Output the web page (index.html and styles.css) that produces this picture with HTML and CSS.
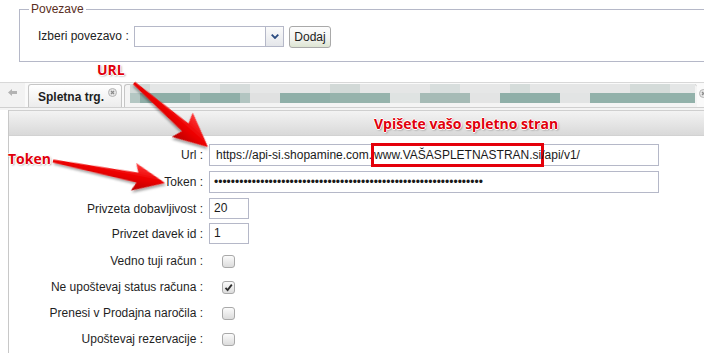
FILE: index.html
```html
<!DOCTYPE html>
<html lang="sl">

<head>
  <meta charset="UTF-8">
  <meta name="viewport" content="width=device-width, initial-scale=1.0">
  <title>Povezave | Spletna trgovina</title>
  <link rel="stylesheet" href="styles.css">
</head>

<body>
  <fieldset class="links">
    <legend>Povezave</legend>
    <div class="links_row">
      <label for="links_select" class="links_label">Izberi povezavo :</label>
      <div class="combo">
        <input type="text" id="links_select" class="combo_input" />
        <span class="combo_trigger">
          <svg width="8" height="5" viewBox="0 0 8 5"><polyline points="0.7,0.7 4,4 7.3,0.7" fill="none" stroke="#2b4b80" stroke-width="1.8" /></svg>
        </span>
      </div>
      <button class="btn">Dodaj</button>
    </div>
  </fieldset>

  <div class="note note-url">URL</div>

  <div class="tabs">
    <span class="tabs_scroll">
      <svg width="9" height="7" viewBox="0 0 9 7"><polygon points="0,3.5 4,0 4,2 9,2 9,5 4,5 4,7" fill="#b3b3b3" /></svg>
    </span>
    <div class="tab tab-active">
      Spletna trg.
      <svg class="tab_close" width="9" height="9" viewBox="0 0 9 9"><circle cx="4.5" cy="4.5" r="4" fill="#e6e6e6" stroke="#b4b4b4" /><path d="M3 3 L6 6 M6 3 L3 6" stroke="#8a8a8a" stroke-width="1.2" /></svg>
    </div>
    <div class="tab tab-blur"><span class="blur"></span></div>
    <svg class="tab_close tab_close-edge" width="9" height="9" viewBox="0 0 9 9"><circle cx="4.5" cy="4.5" r="4" fill="#e6e6e6" stroke="#b4b4b4" /><path d="M3 3 L6 6 M6 3 L3 6" stroke="#8a8a8a" stroke-width="1.2" /></svg>
  </div>
  <div class="tabs_spacer"></div>

  <div class="panel">
    <div class="panel_toolbar"><span class="note">Vpišete vašo spletno stran</span></div>

    <div class="form">
      <div class="form_row form_row-url">
        <label class="form_label">Url :</label>
        <div class="field field-wide">https://api-si.shopamine.com.<span class="field_mark">www.VAŠASPLETNASTRAN.si</span>/api/v1/</div>
      </div>
      <div class="form_row form_row-token">
        <label class="form_label">Token :</label>
        <div class="field field-wide field-secret">••••••••••••••••••••••••••••••••••••••••••••••••••••••••••••••••</div>
      </div>
      <div class="form_row form_row-num">
        <label class="form_label">Privzeta dobavljivost :</label>
        <div class="field field-small">20</div>
      </div>
      <div class="form_row form_row-num">
        <label class="form_label">Privzet davek id :</label>
        <div class="field field-small">1</div>
      </div>
      <div class="form_row form_row-check">
        <label class="form_label">Vedno tuji račun :</label>
        <span class="check"></span>
      </div>
      <div class="form_row form_row-check">
        <label class="form_label">Ne upoštevaj status računa :</label>
        <span class="check">
          <svg width="11" height="11" viewBox="0 0 11 11"><path d="M2.5 5.8 L4.6 8 L8.8 2.6" fill="none" stroke="#2d2d2d" stroke-width="1.8" /></svg>
        </span>
      </div>
      <div class="form_row form_row-check">
        <label class="form_label">Prenesi v Prodajna naročila :</label>
        <span class="check"></span>
      </div>
      <div class="form_row form_row-check">
        <label class="form_label">Upoštevaj rezervacije :</label>
        <span class="check"></span>
      </div>
    </div>
  </div>

  <!-- annotations drawn over the screenshot -->
  <div class="note note-token">Token</div>
  <svg class="arrows" width="704" height="353" viewBox="0 0 704 353">
    <defs>
      <linearGradient id="arrow-fill" x1="0" y1="0" x2="0" y2="1">
        <stop offset="0" stop-color="#ff3b3b" />
        <stop offset="0.5" stop-color="#ec0000" />
        <stop offset="1" stop-color="#b80000" />
      </linearGradient>
      <filter id="arrow-shadow" x="-20%" y="-50%" width="140%" height="200%">
        <feDropShadow dx="1.5" dy="2" stdDeviation="1.2" flood-color="#000" flood-opacity="0.35" />
      </filter>
    </defs>
    <g transform="translate(134 83) rotate(40.86)" filter="url(#arrow-shadow)">
      <polygon points="0,-1.5 67.8,-5 63.8,-16 97.8,0 63.8,16 67.8,5 0,1.5" fill="url(#arrow-fill)" />
    </g>
    <g transform="translate(53 161) rotate(11.11)" filter="url(#arrow-shadow)">
      <polygon points="0,-1.5 86.1,-5 82.1,-14 114.1,0 82.1,14 86.1,5 0,1.5" fill="url(#arrow-fill)" />
    </g>
  </svg>
</body>

</html>
```

FILE: styles.css
```css
* {
  box-sizing: border-box;
  padding: 0;
  margin: 0;
}

html {
  font-family: 'Liberation Sans', Arial, sans-serif;
  font-size: 12px;
  color: #222222;
}

body {
  position: relative;
  width: 704px;
  height: 353px;
  overflow: hidden;
  background-color: #ffffff;
}

/* Povezave */

.links {
  margin: 2px -30px 0 19px;
  padding: 0 0 14px 9px;
  border: 1px solid #b5b8c8;
}

.links legend {
  padding: 0 2px;
  line-height: 14px;
  color: #5a2e1e;
}

.links_row {
  display: flex;
  align-items: center;
  height: 22px;
  margin-top: 9px;
  padding-left: 9px;
}

.links_label {
  width: 96px;
}

.combo {
  display: flex;
  width: 150px;
  height: 21px;
  border: 1px solid #b5b8c8;
  background-color: #ffffff;
}

.combo_input {
  flex: 1;
  min-width: 0;
  border: none;
  outline: none;
}

.combo_trigger {
  display: flex;
  align-items: center;
  justify-content: center;
  width: 18px;
  border-left: 1px solid #b5b8c8;
  background: linear-gradient(#fbfbfb, #e4e6ea);
}

.btn {
  width: 42px;
  height: 22px;
  margin-left: 5px;
  margin-top: 2px;
  border: 1px solid #a9a9a9;
  border-radius: 3px;
  background: linear-gradient(#fdfdfd, #f3f3f1 55%, #dde5d2);
  font-family: inherit;
  font-size: 12px;
  color: #222222;
}

/* red annotations */

.note {
  font-family: 'Open Sans', sans-serif;
  font-weight: 700;
  font-size: 14px;
  line-height: 16px;
  color: #e1000c;
  text-shadow: -1px 0 #ffffff, 1px 0 #ffffff, 0 -1px #ffffff, 0 1px #ffffff, 1px 1px 2px rgba(0, 0, 0, 0.5);
}

.note-url {
  padding-left: 97px;
  margin-bottom: 4px;
}

.note-token {
  position: absolute;
  left: 8px;
  top: 151px;
}

.arrows {
  position: absolute;
  left: 0;
  top: 0;
  pointer-events: none;
}

/* tabs */

.tabs {
  position: relative;
  display: flex;
  align-items: flex-end;
  height: 25px;
  border-top: 1px solid #d8d8d8;
  background-color: #fafafa;
}

.tabs_scroll {
  display: flex;
  align-items: center;
  justify-content: center;
  align-self: stretch;
  width: 25px;
  padding-bottom: 5px;
  background-color: #f2f2f2;
}

.tab {
  position: relative;
  height: 23px;
  border: 1px solid #c6c6c6;
  border-bottom: none;
  border-radius: 3px 3px 0 0;
}

.tab-active {
  width: 94px;
  margin-left: 3px;
  padding: 5px 0 0 9px;
  background: linear-gradient(#ffffff, #ececec);
  font-weight: 700;
  color: #1e1e1e;
}

.tab_close {
  position: absolute;
  right: 4px;
  top: 3px;
}

.tab-blur {
  flex: 1;
  margin-left: 2px;
  margin-right: 7px;
  padding-left: 5px;
  border-right: none;
  background-color: #f4f4f4;
}

.tab_close-edge {
  right: -4px;
  top: 6px;
}

.blur {
  display: block;
  width: 565px;
  height: 19px;
  margin-top: -1px;
  background:
    linear-gradient(to right,
      #b4c7c3 0 10px, #8eaea7 10px 60px, #a3bbb6 60px 70px, #8fafa8 70px 110px,
      #b2c5c1 110px 120px, #e0e1e1 120px 150px, #8fafa8 150px 200px, #96b3ac 200px 260px,
      #dfe3e2 260px 290px, #a6bbb6 290px 340px, #e3e4e4 340px 370px, #8fafa8 370px 430px,
      #e2e4e4 430px 460px, #92b1aa 460px 565px) bottom / 100% 10px no-repeat,
    linear-gradient(to right,
      #d3dbd9 0 20px, #e4e6e6 20px 90px, #d6dcdb 90px 120px, #e6e7e7 120px 200px,
      #d2d9d7 200px 230px, #e5e6e6 230px 300px, #d8dedd 300px 330px, #e6e7e7 330px 380px,
      #d5dcda 380px 400px, #e5e6e6 400px 500px, #d4dbd9 500px 540px, #e4e6e6 540px 565px) top / 100% 9px no-repeat;
}

.tabs_spacer {
  height: 3px;
  border-top: 1px solid #d0d0d0;
  background-color: #f4f4f4;
}

/* panel */

.panel {
  height: 250px;
  margin-left: 8px;
  border-left: 1px solid #c8c8c8;
}

.panel_toolbar {
  height: 26px;
  padding: 5px 0 0 365px;
  border-top: 1px solid #cfcfcf;
  border-bottom: 1px solid #d2d2d2;
  background: linear-gradient(#f3f3f3, #d9d9d9);
}

.form {
  padding-top: 8px;
}

.form_row {
  display: flex;
  align-items: center;
  margin-bottom: 5px;
}

.form_label {
  width: 200px;
  padding-right: 6px;
  text-align: right;
  color: #1f1f1f;
}

.field {
  height: 22px;
  padding-left: 6px;
  border: 1px solid #b5b8c8;
  line-height: 20px;
  white-space: nowrap;
  color: #1a1a1a;
  background-color: #ffffff;
}

.field-wide {
  width: 450px;
}

.field-secret {
  padding-left: 4px;
  letter-spacing: 0;
}

.field_mark {
  display: inline-block;
  margin-left: 2px;
  padding: 2px 0;
  line-height: 14px;
  outline: 3px solid #e4000a;
}

.form_row-num {
  margin-bottom: 4px;
}

.form_row-num .field {
  height: 21px;
  line-height: 19px;
}

.field-small {
  width: 40px;
  padding-left: 4px;
}

.form_row-check {
  height: 26px;
  margin-bottom: 0;
}

.check {
  display: flex;
  align-items: center;
  justify-content: center;
  width: 13px;
  height: 13px;
  margin-left: 13px;
  border: 1px solid #a9a9a9;
  border-radius: 3px;
  background: linear-gradient(#fbfbfb, #dcdcdc);
}
```
